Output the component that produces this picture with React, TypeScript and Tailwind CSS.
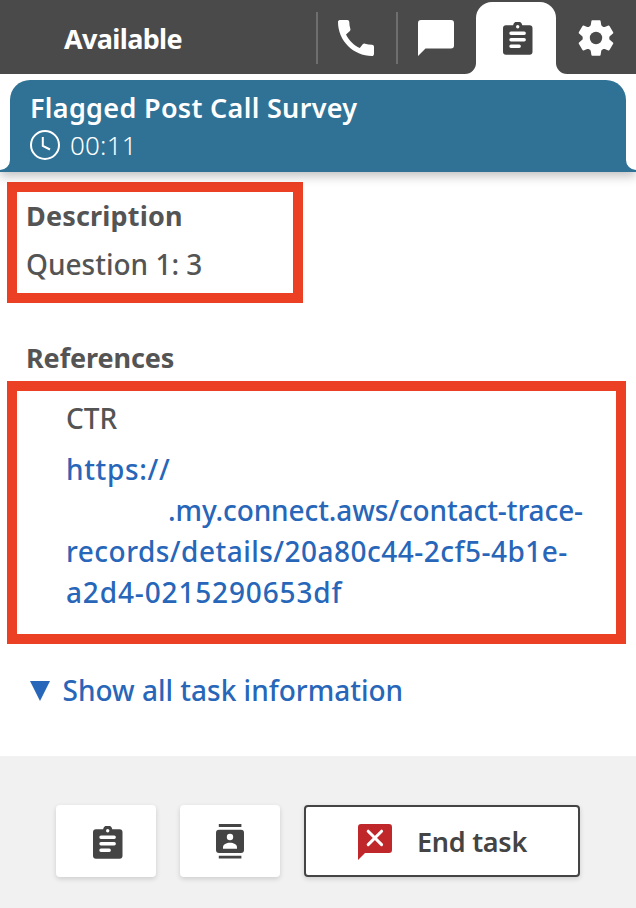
import React from "react";

const PhoneIcon = () => (
  <svg width="48" height="48" viewBox="0 0 24 24" fill="currentColor">
    <path d="M20.01 15.38c-1.23 0-2.42-.2-3.53-.56-.35-.12-.74-.03-1.01.24l-1.57 1.97c-2.83-1.35-5.48-3.9-6.89-6.83l1.95-1.66c.27-.28.35-.67.24-1.02-.37-1.11-.56-2.3-.56-3.53 0-.54-.45-.99-.99-.99H4.19C3.65 3 3 3.24 3 3.99 3 13.28 10.73 21 20.01 21c.71 0 .99-.63.99-1.18v-3.45c0-.54-.45-.99-.99-.99z" />
  </svg>
);

const ChatIcon = () => (
  <svg width="36" height="36" viewBox="0 0 36 36" fill="currentColor">
    <path d="M3 0h30a3 3 0 0 1 3 3v22.500a3 3 0 0 1-3 3H7.500L0 36V3a3 3 0 0 1 3-3z" />
  </svg>
);

const ClipboardIcon = () => (
  <svg width="30" height="33" viewBox="0 0 30 33">
    <path
      fill="#444"
      d="M3 3.200h7.100a4.700 4.700 0 0 1 9.200 0H26.500a3 3 0 0 1 3 3v23.500a3 3 0 0 1-3 3H3a3 3 0 0 1-3-3V6.200a3 3 0 0 1 3-3z"
    />
    <circle cx="14.700" cy="4.800" r="1.700" fill="#fff" />
    <path d="M8 11.300h13.200M8 17.700h13.200M8 24.300h8.200" stroke="#fff" strokeWidth="3.400" strokeLinecap="round" />
  </svg>
);

const GearIcon = () => (
  <svg width="38" height="38" viewBox="-19 -19 38 38" fill="currentColor">
    <circle r="13.2" />
    {[0, 60, 120, 180, 240, 300].map((angle) => (
      <path
        key={angle}
        transform={`rotate(${angle})`}
        d="M-6.600 -11.300C-5.500 -12.300 -5.300 -12.500 -5.200 -13.200L-4.600 -16.900Q-4.500 -17.700 -3.700 -17.700H3.700Q4.500 -17.700 4.600 -16.900L5.200 -13.200C5.300 -12.500 5.500 -12.300 6.600 -11.300z"
      />
    ))}
    <circle r="6.2" fill="#4a4a4a" />
  </svg>
);

const ClockIcon = () => (
  <svg width="30" height="30" viewBox="0 0 30 30" fill="none" stroke="#fff" strokeWidth="2">
    <circle cx="15" cy="15" r="14" />
    <path d="M12.800 7v8.800l7.200 3.700" />
  </svg>
);

const ContactIcon = () => (
  <svg width="28" height="35" viewBox="0 0 28 35">
    <path fill="#444" d="M2.800 0h22.600v3H2.800zM2.800 31.800h22.600v2.800H2.800z" />
    <rect y="5.700" width="28" height="23.200" rx="3" fill="#444" />
    <circle cx="14" cy="13" r="3.200" fill="#fff" />
    <path d="M7 24.800v-1.600c0-2.800 3.500-4.400 7-4.400s7 1.600 7 4.400v1.600z" fill="#fff" />
  </svg>
);

const EndIcon = () => (
  <svg width="34" height="36" viewBox="0 0 34 36">
    <path d="M3 0h28a3 3 0 0 1 3 3v23a3 3 0 0 1-3 3H7L0 36V3a3 3 0 0 1 3-3z" fill="#bf272b" />
    <path d="M10.200 7.200 23.600 20.600M23.600 7.200 10.200 20.600" stroke="#fff" strokeWidth="3" strokeLinecap="round" />
  </svg>
);

export default function App() {
  return (
    <div className="flex h-[908px] w-[636px] flex-col overflow-hidden bg-white font-['Noto_Sans',sans-serif] text-[28px] leading-[41px] whitespace-nowrap text-[#545454]">
      <header className="flex h-[74px] shrink-0 bg-[#4a4a4a] text-white">
        <div className="w-[316px] pt-[18px] pl-16 text-[27px] font-bold tracking-[-0.65px]">Available</div>
        <button className="mt-3 flex h-[52px] w-20 items-center justify-center border-l-2 border-[#6f6f6f] pr-0.5">
          <PhoneIcon />
        </button>
        <button className="mt-3 flex h-[52px] w-20 items-center justify-center border-l-2 border-[#6f6f6f] pr-0.5">
          <ChatIcon />
        </button>
        <button className="relative mt-0.5 flex h-[72px] w-20 justify-center rounded-t-[16px] bg-white pt-5 pl-[3px]">
          <ClipboardIcon />
          <svg className="absolute bottom-0 -left-[11px]" width="11" height="11" fill="#fff">
            <path d="M11 0v11H0A11 11 0 0 0 11 0z" />
          </svg>
          <svg className="absolute -right-[11px] bottom-0" width="11" height="11" fill="#fff">
            <path d="M0 0v11h11A11 11 0 0 1 0 0z" />
          </svg>
        </button>
        <button className="flex w-20 justify-center pt-[19px]">
          <GearIcon />
        </button>
      </header>

      <section className="mt-1.5 h-[92px] shrink-0 px-2.5 shadow-[0_4px_10px_rgba(0,0,0,0.25)] [clip-path:inset(0_0_-20px_0)]">
        <div className="relative h-full rounded-t-[20px] bg-[#2f7295] px-5 pt-[7px] text-white">
          <svg className="absolute bottom-0 -left-2.5" width="10" height="12" fill="#2f7295">
            <path d="M10 0v12H0v-2A10 10 0 0 0 10 0z" />
          </svg>
          <svg className="absolute -right-2.5 bottom-0" width="10" height="12" fill="#2f7295">
            <path d="M0 0v12h10v-2A10 10 0 0 1 0 0z" />
          </svg>
          <h1 className="h-[38px] text-[27px] font-semibold tracking-[0.31px]">Flagged Post Call Survey</h1>
          <div className="-mt-px flex items-center gap-2.5">
            <ClockIcon />
            <span className="pt-px text-[26px] font-light tracking-[0.2px]">00:11</span>
          </div>
        </div>
      </section>

      <main className="flex h-[584px] shrink-0 flex-col items-start pt-2.5 pl-[7px]">
        <section className="h-[121px] w-[296px] border-10 border-[#ec4025] pt-[3px] pl-[9px]">
          <h2 className="text-[27px] font-bold tracking-[0.17px]">Description</h2>
          <p className="mt-2 font-medium">Question 1: 3</p>
        </section>
        <h2 className="mt-[34px] pl-[19px] text-[27px] font-bold tracking-[-0.1px]">References</h2>
        <section className="mt-[3px] h-[263px] w-[619px] border-10 border-[#ec4025] pt-[7px] pl-[49px]">
          <p className="font-medium">CTR</p>
          <a className="mt-2.5 block font-medium text-[#2766b8]">
            <span className="block tracking-[0.65px]">https://</span>
            <span className="block pl-[102px] tracking-[-0.1px]">.my.connect.aws/contact-trace-</span>
            <span className="block tracking-[0.48px]">records/details/20a80c44-2cf5-4b1e-</span>
            <span className="block tracking-[0.85px]">a2d4-0215290653df</span>
          </a>
        </section>
        <button className="mt-[26px] ml-[23px] flex items-center gap-[12.500px] font-medium text-[#2766b8]">
          <svg width="20" height="20" fill="#2766b8">
            <path d="M0 0h20L10 20z" />
          </svg>
          <span>Show all task information</span>
        </button>
      </main>

      <footer className="flex h-[152px] gap-6 bg-[#f1f1f1] pt-[49px] pl-14">
        <button className="flex h-[72px] w-[100px] justify-center rounded bg-white pt-[21px] pl-[3px] shadow-[0_2px_5px_rgba(0,0,0,0.15)]">
          <ClipboardIcon />
        </button>
        <button className="flex h-[72px] w-[100px] justify-center rounded bg-white pt-[19px] shadow-[0_2px_5px_rgba(0,0,0,0.15)]">
          <ContactIcon />
        </button>
        <button className="flex h-[72px] w-[276px] rounded border-2 border-[#444] bg-white pt-[17px] pl-[52px] text-[#444] shadow-[0_2px_5px_rgba(0,0,0,0.15)]">
          <EndIcon />
          <span className="-mt-[3px] ml-[25px] text-[27px] font-semibold tracking-[-0.27px]">End task</span>
        </button>
      </footer>
    </div>
  );
}
